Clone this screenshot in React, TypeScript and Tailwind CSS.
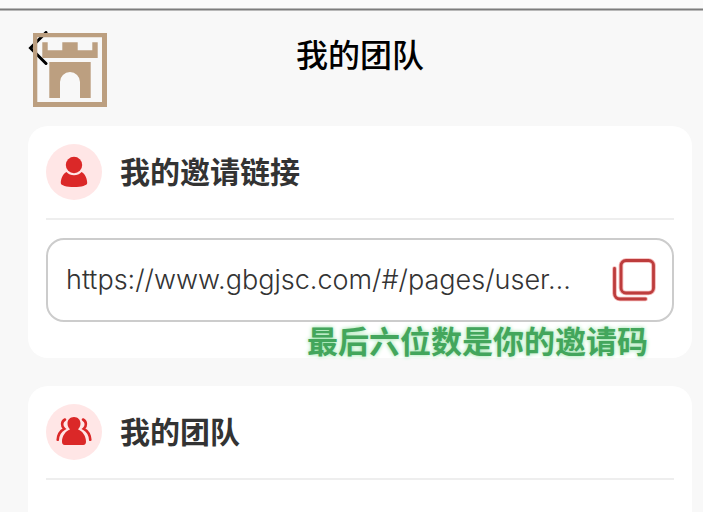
import type { ReactNode } from "react";

const inviteLink = "https://www.gbgjsc.com/#/pages/user…";

const BackIcon = () => (
	<svg viewBox="0 0 20 36" className="h-9 w-5" fill="none" stroke="#000" strokeWidth="3">
		<path d="M18 1.500 2.500 17 18 32.500" strokeLinecap="round" />
	</svg>
);

const CastleLogo = () => (
	<svg viewBox="0 0 74 74" className="size-[74px]" fill="#bc9f80" aria-hidden="true">
		<path fillRule="evenodd" d="M0 0H74V74H0ZM4.300 4.300V69H69V4.300Z" />
		<path d="M9.300 9.300H14.700V17.300H29.300V9.300H44.700V17.300H59.300V9.300H64.700V25H9.300Z" />
		<path d="M16.300 29H57.700V65H47V49A10 10 0 0 0 27 49V65H16.300Z" />
	</svg>
);

const UserIcon = () => (
	<svg viewBox="0 0 56 56" className="size-14" fill="#db2828" aria-hidden="true">
		<circle cx="28" cy="21" r="8.200" />
		<path d="M20.500 28C22.500 30.300 25 31.300 28 31.300s5.500-1 7.500-3.300c3.500 1.800 5.700 6.500 5.700 11 0 2.500-5.700 4-13.200 4s-13.200-1.500-13.200-4c0-4.500 2.200-9.200 5.700-11Z" />
	</svg>
);

const TeamIcon = () => (
	<svg viewBox="0 0 56 56" className="size-14" fill="#db2828" aria-hidden="true">
		<path d="M28 13c-3.900 0-6.500 2.900-6.500 6.400 0 2.300 1 4.400 2.600 5.800-4.800 2-8.100 7-8.100 12.300 0 2.300.8 3.500 2.800 3.500h18.400c2 0 2.800-1.200 2.800-3.500 0-5.300-3.300-10.300-8.100-12.300 1.600-1.400 2.600-3.500 2.600-5.800 0-3.500-2.600-6.400-6.500-6.400Z" />
		<g fill="none" stroke="#db2828" strokeWidth="2.600" strokeLinecap="round">
			<path d="M19 15.500c-3.800 2-3.600 7-.8 9.300-4 2.200-6.200 6.200-6.500 11" />
			<path d="M37 15.500c3.800 2 3.600 7 .8 9.300 4 2.200 6.200 6.200 6.500 11" />
		</g>
	</svg>
);

const CopyIcon = () => (
	<svg viewBox="0 0 44 44" className="size-11" fill="none" aria-hidden="true">
		<g stroke="#f3b5b5" strokeWidth="4.600" strokeLinecap="round">
			<rect x="9" y="2.500" width="32.500" height="32.500" rx="5" />
			<path d="M2.500 10.500V35.500a5.500 5.500 0 0 0 5.500 5.500h25.500" />
		</g>
		<g stroke="#bd3c3c" strokeWidth="2.800" strokeLinecap="round">
			<rect x="9" y="2.500" width="32.500" height="32.500" rx="5" />
			<path d="M2.500 10.500V35.500a5.500 5.500 0 0 0 5.500 5.500h25.500" />
		</g>
	</svg>
);

const CardHeader = ({ icon, title }: { icon: ReactNode; title: string }) => (
	<div className="flex items-center gap-[18px] border-b-2 border-[#eeeeee] pb-[18px]">
		<span className="rounded-full bg-[#ffe6e6]">{icon}</span>
		<h2 className="text-[30px] leading-10 font-bold">{title}</h2>
	</div>
);

export default function App() {
	return (
		<div className="flex min-h-screen flex-col bg-[#f8f8f8] font-['Inter','Noto_Sans_CJK_SC',sans-serif] text-[#333333]">
			<div className="h-2 bg-[#fafafa]" />
			<div className="h-[3px] border-y border-[#b9b9b9] bg-[#7d7d7d]" />
			<header className="relative flex h-[87px] items-center justify-center pt-0.5 pr-[11px] pl-7">
				<button type="button" aria-label="返回" className="absolute top-5 left-7">
					<BackIcon />
				</button>
				<div className="pointer-events-none absolute top-[22px] left-[33px]">
					<CastleLogo />
				</div>
				<h1 className="text-[32px] leading-10 font-medium text-black">我的团队</h1>
			</header>

			<main className="flex flex-1 flex-col gap-7 pt-7 pr-[11px] pl-7">
				<section className="rounded-[20px] bg-white px-[18px] pt-[18px]">
					<CardHeader icon={<UserIcon />} title="我的邀请链接" />
					<div className="mt-[18px] flex h-[84px] items-center gap-4 rounded-[18px] border-2 border-[#cccccc] px-4">
						<input
							type="text"
							readOnly
							aria-label="我的邀请链接"
							value={inviteLink}
							className="min-w-0 flex-1 bg-transparent px-0.5 text-[27px] leading-10 font-light outline-none"
						/>
						<button type="button" aria-label="复制">
							<CopyIcon />
						</button>
					</div>
					<p className="pt-1 pr-[26px] text-right text-[31px] leading-8 font-bold text-[#43a65c] [text-shadow:0_0_4px_#8fe0a0]">
						最后六位数是你的邀请码
					</p>
				</section>

				<section className="flex-1 rounded-t-[20px] bg-white px-[18px] pt-[18px]">
					<CardHeader icon={<TeamIcon />} title="我的团队" />
				</section>
			</main>
		</div>
	);
}
